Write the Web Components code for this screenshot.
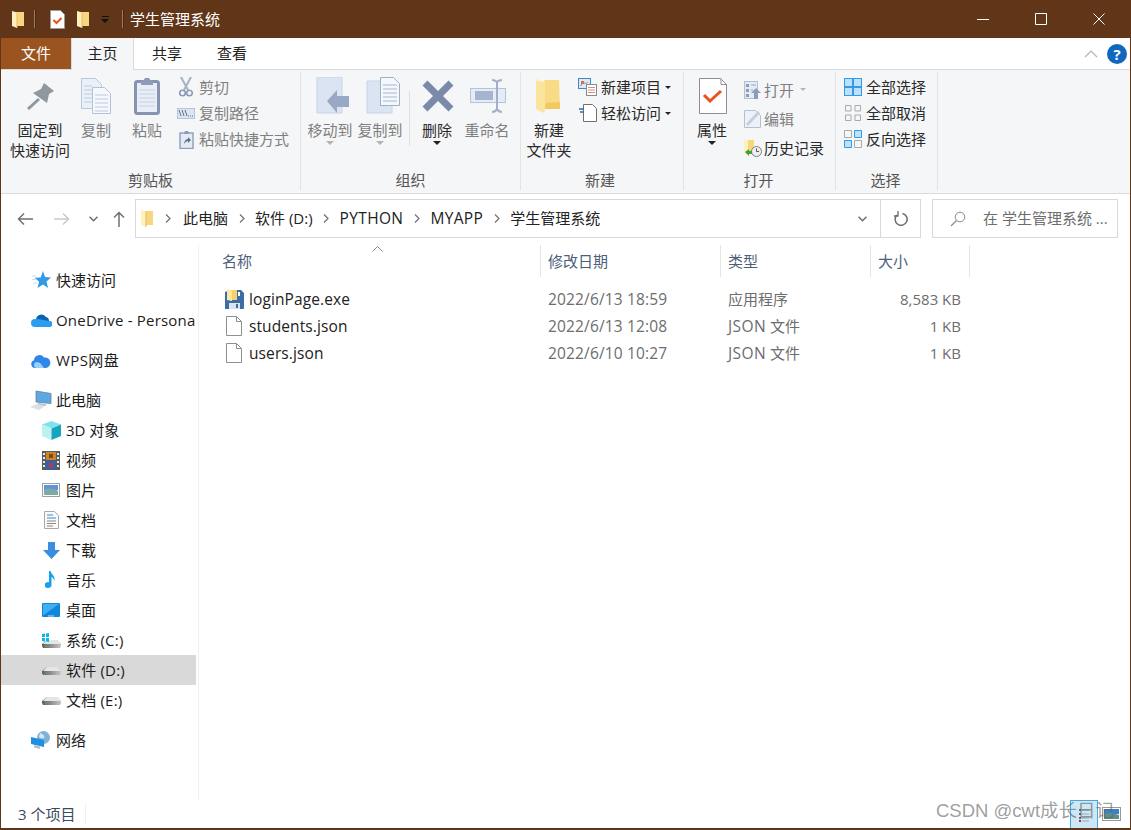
<!DOCTYPE html>
<html lang="zh">
<head>
<meta charset="utf-8">
<title>学生管理系统</title>
<style>
  html, body { margin: 0; padding: 0; background: #fff; }
  body { font: 15px/20px "Open Sans", "Noto Sans CJK SC", sans-serif; color: #222; }
</style>
</head>
<body>
<explorer-window>
  <title-bar slot="title">学生管理系统</title-bar>
  <ribbon-tabs slot="tabs"></ribbon-tabs>
  <file-ribbon slot="ribbon">
    <ribbon-group label="剪贴板" style="width:300px;padding-left:8px">
      <big-button icon="pin" w="62">固定到<br>快速访问</big-button>
      <big-button icon="copy" w="50" muted>复制</big-button>
      <big-button icon="paste" w="52" muted>粘贴</big-button>
      <small-stack style="--row:26px;--ic:18px;--gap:4px;margin-left:4px;margin-top:1px">
        <small-button icon="scissors" muted>剪切</small-button>
        <small-button icon="copypath" muted>复制路径</small-button>
        <small-button icon="shortcut" muted>粘贴快捷方式</small-button>
      </small-stack>
    </ribbon-group>
    <ribbon-group label="组织" style="width:220px;padding-left:4px">
      <big-button icon="moveto" w="50" muted caret="gray" style="--ioff:3px">移动到</big-button>
      <big-button icon="copyto" w="50" muted caret="gray" style="--ioff:3px">复制到</big-button>
      <ribbon-sep></ribbon-sep>
      <big-button icon="del" w="50" caret="dark" style="--ioff:1px">删除</big-button>
      <big-button icon="rename" w="50" muted style="--ioff:1px">重命名</big-button>
    </ribbon-group>
    <ribbon-group label="新建" style="width:163px;padding-left:3px;--shift:-4px">
      <big-button icon="bigfolder" w="50" style="--ioff:-1px">新建<br>文件夹</big-button>
      <small-stack style="--row:26px;--ic:19px;--gap:4px;margin-left:4px;margin-top:1px">
        <small-button icon="newitem" caret="dark">新建项目</small-button>
        <small-button icon="easy" caret="dark">轻松访问</small-button>
      </small-stack>
    </ribbon-group>
    <ribbon-group label="打开" style="width:152px;padding-left:3px;--shift:-2px">
      <big-button icon="props" w="50" caret="dark" style="--ioff:1px">属性</big-button>
      <small-stack style="--row:29px;--ic:17px;--gap:3px;margin-left:7px;margin-top:2px">
        <small-button icon="open" muted caret="gray">打开</small-button>
        <small-button icon="edit" muted>编辑</small-button>
        <small-button icon="history">历史记录</small-button>
      </small-stack>
    </ribbon-group>
    <ribbon-group label="选择" style="width:102px;padding-left:8px;--shift:-2px">
      <small-stack style="--row:26px;--ic:18px;--gap:4px;margin-top:1px">
        <small-button icon="selall">全部选择</small-button>
        <small-button icon="selnone">全部取消</small-button>
        <small-button icon="selinv">反向选择</small-button>
      </small-stack>
    </ribbon-group>
  </file-ribbon>
  <address-row slot="address"></address-row>
  <nav-pane slot="nav">
    <nav-item icon="star" style="margin-bottom:10px">快速访问</nav-item>
    <nav-item icon="onedrive" style="margin-bottom:10px;letter-spacing:.2px">OneDrive - Persona</nav-item>
    <nav-item icon="wps" style="margin-bottom:10px;letter-spacing:.4px">WPS网盘</nav-item>
    <nav-item icon="pc">此电脑</nav-item>
    <nav-item icon="cube" sub>3D 对象</nav-item>
    <nav-item icon="film" sub>视频</nav-item>
    <nav-item icon="pic" sub>图片</nav-item>
    <nav-item icon="docs" sub>文档</nav-item>
    <nav-item icon="down" sub>下载</nav-item>
    <nav-item icon="music" sub>音乐</nav-item>
    <nav-item icon="desktop" sub>桌面</nav-item>
    <nav-item icon="drivec" sub style="letter-spacing:.2px">系统 (C:)</nav-item>
    <nav-item icon="drive" sub selected style="letter-spacing:.2px">软件 (D:)</nav-item>
    <nav-item icon="drive" sub style="margin-bottom:10px;letter-spacing:.2px">文档 (E:)</nav-item>
    <nav-item icon="network">网络</nav-item>
  </nav-pane>
  <file-list slot="list">
    <file-row icon="exe" name="loginPage.exe" date="2022/6/13 18:59" type="应用程序" size="8,583 KB"></file-row>
    <file-row icon="file" name="students.json" date="2022/6/13 12:08" type="JSON 文件" size="1 KB"></file-row>
    <file-row icon="file" name="users.json" date="2022/6/10 10:27" type="JSON 文件" size="1 KB"></file-row>
  </file-list>
  <status-bar slot="status">3 个项目</status-bar>
</explorer-window>

<script>
const svg = (w, h, body) => `<svg xmlns="http://www.w3.org/2000/svg" width="${w}" height="${h}" viewBox="0 0 ${w} ${h}" fill="none">${body}</svg>`;

const driveBody = (y) => `<defs><linearGradient id="dg${y}"><stop offset="0" stop-color="#5f5f5f"/><stop offset="1" stop-color="#c6c6c6"/></linearGradient></defs>
  <path d="M0 ${y + 4}l5-4h10l4 4v2l-1 2H1l-1-2z" fill="url(#dg${y})"/><path d="M5 ${y}h10l4 4H1z" fill="#e6e6e6"/><path d="M3 ${y + 6}h2" stroke="#47c14a"/>`;

const ICONS = {
  sidefolder: svg(12, 17, '<path d="M4 1h8v14H4z" fill="#f6d77f"/><path d="M0 0l5 1.500V17L0 15z" fill="#fff0bd"/><path d="M5 1.500V17" stroke="#e3bd5e"/>'),
  checkdoc: svg(15, 19, '<path d="M.5.5h10l4 4v14H.5z" fill="#fff" stroke="#9b9b9b"/><path d="M3.500 10l3 3 5-5" stroke="#e8521f" stroke-width="2"/>'),
  pin: svg(27, 27, '<path d="M1 26l11-10" stroke="#8f979f" stroke-width="3"/><path d="M17 0l10 8-5 3-2 9L6 10l8-4z" fill="#8f979f"/>'),
  copy: svg(30, 36, '<path d="M.5.5h14l6 6v24H.5z" fill="#eaf0f8" stroke="#bac8db"/><path d="M11.500 9.500h12l6 6v20h-18z" fill="#f4f7fb" stroke="#b3c2d8"/><path d="M3 8h8M3 12h8M3 16h8M3 20h8M3 24h8M14 17h13M14 21h13M14 25h13M14 29h13M14 33h13" stroke="#bccbdf"/>'),
  paste: svg(26, 38, '<rect x="1.500" y="4.500" width="23" height="32" rx="2" fill="#e9eef6" stroke="#8694b2" stroke-width="3"/><path d="M9 4l2-3h4l2 3h2v4H7V4z" fill="#8e9cb9"/><path d="M5 13h16M5 17h16M5 21h16M5 25h16M5 29h16" stroke="#c6d1e3"/>'),
  scissors: svg(14, 20, '<path d="M2 0l7 13M12 0L5 13" stroke="#a6b1c4" stroke-width="2"/><circle cx="3.500" cy="16" r="2.800" stroke="#8c9ab6" stroke-width="1.600"/><circle cx="10.500" cy="16" r="2.800" stroke="#8c9ab6" stroke-width="1.600"/>'),
  copypath: svg(18, 11, '<rect x=".5" y=".5" width="17" height="10" fill="#dde5f1" stroke="#b6c3d8"/><path d="M2 2l2 6M5 2l2 6M8 2l2 6" stroke="#5f708e"/><path d="M11 8h1M13 8h1M15 8h1" stroke="#5f708e"/>'),
  shortcut: svg(15, 19, '<rect x="1" y="3" width="13" height="15.500" fill="#e5ebf4" stroke="#8f9dba" stroke-width="1.400"/><path d="M5 3l1-2h3l1 2v1H5z" fill="#8f9dba"/><path d="M5 14c0-3 2-5 4-5V7l3 3-3 3v-2c-1 0-3 1-4 3z" fill="#5d7095"/>'),
  moveto: svg(34, 38, '<path d="M1 0h25v36H1z" fill="#dbe4f2" stroke="#c8d4e6"/><path d="M12 28l10-11v6h12v11H22v6z" transform="translate(-1 -4)" fill="#98a8c5"/>'),
  copyto: svg(34, 38, '<path d="M1 4h25v32H1z" fill="#dbe4f2" stroke="#c8d4e6"/><path d="M14.500.5h13l6 6v22h-19z" fill="#f4f7fb" stroke="#9fafc8"/><path d="M17 8h14M17 12h14M17 16h14M17 20h14M17 24h14" stroke="#a9b8cf"/>'),
  del: svg(32, 32, '<path d="M3 3l26 26M29 3L3 29" stroke="#7a8aa8" stroke-width="7"/>'),
  rename: svg(36, 34, '<rect x=".5" y="9.500" width="35" height="14" fill="#e5ecf6" stroke="#b4c3d9"/><rect x="5" y="12" width="18" height="9" fill="#a6b5cf"/><path d="M22 1c3 0 4 1 5 2 1-1 2-2 5-2M27 3v27M22 33c3 0 4-1 5-3 1 2 2 3 5 3" stroke="#a2afc7" stroke-width="2"/>'),
  bigfolder: svg(24, 34, '<path d="M8 1h15l1 29H8z" fill="#f8db84"/><path d="M10 24l14-1v7H8z" fill="#f3c95f"/><path d="M0 0l9 3v27l-1 4-8-4z" fill="#fbe59d"/><path d="M0 1l9 2" stroke="#fff3c9"/>'),
  newitem: svg(19, 18, '<rect x=".5" y=".5" width="12" height="10" fill="#dbe9f7" stroke="#3f87c5"/><path d="M2.500 8l3-4 2 2 2-2" stroke="#7a9a55"/><rect x="3" y="3" width="3" height="3" fill="#d66"/><rect x="8.500" y="6.500" width="10" height="11" fill="#fff" stroke="#8a8a8a"/><path d="M10 9.500h7M10 12h7M10 14.500h7" stroke="#d98a8a"/>'),
  easy: svg(18, 18, '<path d="M4.500.5h9l4 4v13h-13z" fill="#fff" stroke="#707070"/><path d="M0 5h5M1 8h4" stroke="#2a6fb0" stroke-width="1.500"/>'),
  props: svg(28, 36, '<path d="M.5.5h21l6 6v29H.5z" fill="#fff" stroke="#8f8f8f"/><path d="M22 .5v6h5.500" stroke="#8f8f8f"/><path d="M5 17l6 6 11-10" stroke="#e9521e" stroke-width="3"/>'),
  open: svg(17, 18, '<rect x=".5" y=".5" width="13" height="17" fill="#e5ebf4" stroke="#b3bfd2"/><path d="M2 3h3v3H2zM2 8h3v3H2zM2 13h3v3H2z" fill="#8e9cb5"/><path d="M7 4h5M7 9h2" stroke="#9aa7bd"/><path d="M12 7l5 5h-3v6h-4v-6H7z" fill="#8c9dbb"/>'),
  edit: svg(17, 18, '<path d="M.5.5h11l5 5v12H.5z" fill="#eef2f8" stroke="#b3c0d4"/><path d="M3 15L15 2" stroke="#c3cfe0" stroke-width="3"/>'),
  history: svg(18, 18, '<path d="M3 1h7v14H3z" fill="#f6d77f"/><path d="M0 0l4 1v15l-4-2z" fill="#fff0bd"/><circle cx="12.500" cy="12.500" r="5" fill="#eee" stroke="#7f7f7f"/><path d="M12.500 9.500v3h2.500" stroke="#555"/><path d="M1 13l4-3v2h3v3H5v2z" fill="#3ba335"/>'),
  selall: svg(18, 18, '<rect x=".5" y=".5" width="17" height="17" fill="#bfe0fb" stroke="#2f9bea"/><path d="M9 0v18M0 9h18" stroke="#2f9bea" stroke-width="2"/>'),
  selnone: svg(18, 18, '<path d="M1.500 1.500h5.500v5.500H1.500zM11 1.500h5.500v5.500H11zM1.500 11h5.500v5.500H1.500zM11 11h5.500v5.500H11z" stroke="#a9a9a9"/>'),
  selinv: svg(18, 18, '<path d="M.5 .5h7v7h-7zM10.500 10.500h7v7h-7z" stroke="#a9a9a9"/><path d="M10.500.5h7v7h-7zM.5 10.500h7v7h-7z" fill="#bfe0fb" stroke="#2f9bea"/>'),
  star: svg(19, 18, '<path d="M11 0l2 6 6 .500-4.500 4 1.500 6.500-5-3.500L5.500 17l1.600-6.300-4.500-4 6-.3z" fill="#2f9ae6"/><path d="M0 5h4M0 8.500h5M1 12h4" stroke="#bfe0f7"/>'),
  onedrive: svg(21, 14, '<path d="M5 6a5.500 5.500 0 0 1 10-2 4 4 0 0 1 3 4H6z" fill="#0c63b5"/><path d="M4 14a3.900 3.900 0 0 1 0-8h3l11 2a3 3 0 0 1 1 6z" fill="#2a9df0"/>'),
  wps: svg(20, 15, '<path d="M4 15a4 4 0 0 1-1-7.800A5.500 5.500 0 0 1 13 4.500 5.300 5.300 0 0 1 15 15z" fill="#2f86e8"/><path d="M6 15a3 3 0 0 1 0-6c2 0 3 1 4 2l3 4z" fill="#9ad0fb"/>'),
  pc: svg(22, 20, '<path d="M6 1l15 2.500v10L6 12z" fill="#5aa8e4" stroke="#6f7f90" stroke-width=".8"/><path d="M8 13l8 1v2l-8-1z" fill="#b8c0c8"/><path d="M0 17l7-3 8 2-6 4z" fill="#dcdfe3"/>'),
  cube: svg(19, 19, '<path d="M9.500 0L19 3.500 9.500 7.500 0 3.500z" fill="#7fe3ec"/><path d="M0 3.500l9.500 4V19L0 15z" fill="#bdf0f2"/><path d="M19 3.500l-9.500 4V19L19 15z" fill="#15a5bc"/>'),
  film: svg(18, 19, '<rect width="18" height="19" fill="#5b5b5b"/><path d="M1 2h2v2H1zM1 6h2v2H1zM1 10h2v2H1zM1 14h2v2H1zM15 2h2v2h-2zM15 6h2v2h-2zM15 10h2v2h-2zM15 14h2v2h-2z" fill="#e8e8e8"/><rect x="4" y="1" width="10" height="8" fill="#c9832c"/><rect x="4" y="10" width="10" height="8" fill="#2e61b8"/><path d="M7 3h4v4H7z" fill="#7b4a1e"/><path d="M7 12h4v4H7z" fill="#c33"/>'),
  pic: svg(18, 14, '<rect x=".5" y=".5" width="17" height="13" fill="#fff" stroke="#a0a0a0"/><rect x="2" y="2" width="14" height="5" fill="#5f95d8"/><path d="M2 7c4-2 9-2 14 1v4H2z" fill="#7fa9a4"/>'),
  docs: svg(15, 18, '<path d="M.5.5h10l4 4v13H.5z" fill="#fafafa" stroke="#a9a9a9"/><path d="M3 4h6M3 7h9" stroke="#2f8fd8"/><path d="M3 10h9M3 12.500h9M3 15h6" stroke="#888"/>'),
  down: svg(17, 17, '<path d="M5 0h7v8h5l-8.500 9L0 8h5z" fill="#3b8de0"/>'),
  music: svg(12, 18, '<path d="M4 0h1.500c.5 3 5 5 4 10-.5-2-2-3.500-3-4v8a3.500 3 0 1 1-2.500-2.800z" fill="#14a1ee"/>'),
  desktop: svg(18, 14, '<rect width="18" height="14" rx="1" fill="#0f86d8"/><path d="M1 12.500V1h16z" fill="#3cb0f2"/><path d="M6 13h6" stroke="#bfe3f8"/>'),
  drive: svg(19, 9, driveBody(1)),
  drivec: svg(19, 15, driveBody(7) + '<path d="M0 1l3-.500v3.500H0zM4 .400L7 0v4H4zM0 5h3v3.500L0 8zM4 5h3v4l-3-.500z" fill="#10b3f0"/>'),
  network: svg(20, 19, '<circle cx="12.500" cy="6.500" r="6.500" fill="#7fb2d8"/><path d="M9 2c3 1 5 3 4 5-2 1-4 0-5-1z" fill="#d5e6f1"/><path d="M0 6l13 3v7L0 13z" fill="#1f8fe3"/><path d="M3 14l6 1.500V18l-6-1.500z" fill="#b6bec6"/>'),
  exe: svg(20, 20, '<path d="M1 3l5-2h11l3 3v15a1 1 0 0 1-1 1H1z" fill="#3a6ea5"/><path d="M3 1h10v10H3z" fill="#f6d16c"/><path d="M3 0l5 2v10l-5-1z" fill="#fde9a4"/><rect x="5" y="14" width="11" height="6" fill="#dbe5ef"/><rect x="12" y="15" width="2" height="4" fill="#3a6ea5"/><path d="M14 3h2v4h-2z" fill="#fff"/>'),
  file: svg(16, 20, '<path d="M.5.5h10l5 5v14H.5z" fill="#fff" stroke="#8f8f8f"/><path d="M10.500.5v5h5" stroke="#8f8f8f"/>'),
  back: svg(16, 14, '<path d="M16 7H1.500M7 1.500L1.500 7 7 12.500" stroke="#6f6f6f" stroke-width="1.500"/>'),
  fwd: svg(16, 14, '<path d="M0 7h14.500M9 1.500L14.500 7 9 12.500" stroke="#c9c9c9" stroke-width="1.500"/>'),
  chevdown: svg(9, 6, '<path d="M.5.800L4.500 4.800 8.500.800" stroke="#6f6f6f" stroke-width="1.500"/>'),
  up: svg(12, 16, '<path d="M6 16V1.500M1 6.500l5-5 5 5" stroke="#6f6f6f" stroke-width="1.500"/>'),
  crumb: svg(6, 9, '<path d="M1 .5l4 4-4 4" stroke="#6f6f6f" stroke-width="1.200"/>'),
  refresh: svg(14, 15, '<path d="M8.500 2.500a6 6 0 1 1-5.500 1.500" stroke="#6b6b6b" stroke-width="1.500"/><path d="M4 0v5H0" stroke="#6b6b6b" stroke-width="1.300"/>'),
  search: svg(16, 16, '<circle cx="10" cy="6" r="4.800" stroke="#8a8a8a"/><path d="M6.500 9.500L1 15" stroke="#8a8a8a" stroke-width="1.200"/>'),
  details: svg(12, 16, '<path d="M1 2h2v2H1zM1 6h2v2H1zM1 10h2v2H1z" fill="#6a6a6a"/><path d="M1 13h2v2H1z" fill="#c0272d"/><path d="M4 3h7M4 7h7M4 11h7M4 14h7" stroke="#9aa6b5"/>'),
  thumbs: svg(19, 14, '<rect x=".5" y=".5" width="18" height="13" fill="#fff" stroke="#999"/><rect x="2" y="2" width="15" height="5" fill="#3c7fc6"/><path d="M2 7c5-2 9-1 15 1v4H2z" fill="#5c8f88"/>')
};

class FileIcon extends HTMLElement {
  constructor() {
    super();
    this.attachShadow({mode: 'open'});
    this.shadowRoot.innerHTML = `
      <style>
        :host { display: inline-flex; flex: none; align-items: center; justify-content: center; }
        svg { display: block; }
      </style>
      ${ICONS[this.getAttribute('name')] || ''}
    `;
  }
}
customElements.define('file-icon', FileIcon);

class ExplorerWindow extends HTMLElement {
  constructor() {
    super();
    this.attachShadow({mode: 'open'});
    this.shadowRoot.innerHTML = `
      <style>
        :host {
          display: flex; flex-direction: column; position: relative; box-sizing: border-box;
          width: 1131px; height: 830px; overflow: hidden; background: #fff;
          border: 1px solid #603518; border-width: 0 1px 2px 1px;
        }
        .main { flex: 1; min-height: 0; display: flex; }
        .mark {
          position: absolute; left: 935px; top: 800px; font: 18.5px/22px "Liberation Sans", "Noto Sans CJK SC", sans-serif;
          color: rgba(95, 95, 95, .62); white-space: nowrap;
        }
      </style>
      <slot name="title"></slot>
      <slot name="tabs"></slot>
      <slot name="ribbon"></slot>
      <slot name="address"></slot>
      <div class="main"><slot name="nav"></slot><slot name="list"></slot></div>
      <slot name="status"></slot>
      <div class="mark">CSDN @cwt成长日记</div>
    `;
  }
}
customElements.define('explorer-window', ExplorerWindow);

class TitleBar extends HTMLElement {
  constructor() {
    super();
    this.attachShadow({mode: 'open'});
    this.shadowRoot.innerHTML = `
      <style>
        :host {
          display: flex; align-items: center; height: 38px; margin: 0 -1px; padding-left: 12px; box-sizing: border-box;
          background: #603518; color: #fff; flex: none;
        }
        .bar { width: 1px; height: 18px; background: #9a7c66; border-right: 1px solid #4a2810; }
        .drop { width: 8px; height: 7px; display: flex; flex-direction: column; gap: 2px; align-items: center; }
        .drop i { display: block; width: 7px; height: 1px; background: #111; }
        .drop b { display: block; border: 4px solid transparent; border-top-color: #111; border-bottom: 0; }
        .text { margin-left: 6px; flex: 1; }
        .ctl { width: 58px; height: 38px; display: flex; align-items: center; justify-content: center; }
        .ctls { display: flex; margin-right: 3px; }
      </style>
      <file-icon name="sidefolder"></file-icon>
      <span class="bar" style="margin-left:10px"></span>
      <file-icon name="checkdoc" style="margin-left:14px"></file-icon>
      <file-icon name="sidefolder" style="margin-left:12px"></file-icon>
      <span class="drop" style="margin-left:12px"><i></i><b></b></span>
      <span class="bar" style="margin-left:13px"></span>
      <span class="text"><slot></slot></span>
      <div class="ctls">
        <div class="ctl"><svg width="12" height="12" viewBox="0 0 12 12"><path d="M0 6.500h12" stroke="#fff"/></svg></div>
        <div class="ctl"><svg width="12" height="12" viewBox="0 0 12 12" fill="none"><path d="M.5.5h11v11H.5z" stroke="#fff"/></svg></div>
        <div class="ctl"><svg width="12" height="12" viewBox="0 0 12 12"><path d="M.5.5l11 11M11.500.5l-11 11" stroke="#fff"/></svg></div>
      </div>
    `;
  }
}
customElements.define('title-bar', TitleBar);

class RibbonTabs extends HTMLElement {
  constructor() {
    super();
    this.attachShadow({mode: 'open'});
    this.shadowRoot.innerHTML = `
      <style>
        :host {
          display: flex; height: 32px; flex: none; box-sizing: border-box; position: relative;
          background: #fff; border-bottom: 1px solid #dadbdc;
        }
        .tab { display: flex; align-items: center; justify-content: center; height: 31px; padding-bottom: 2px; box-sizing: border-box; color: #222; }
        .file { width: 70px; background: #9b5420; color: #fff; }
        .on {
          width: 63px; height: 32px; background: #f5f6f7; padding-bottom: 3px;
          border: 1px solid #dadbdc; border-width: 0 1px; margin-bottom: -1px;
        }
        .end { margin-left: auto; display: flex; align-items: center; gap: 9px; padding-right: 3px; }
        .help {
          width: 20px; height: 20px; border-radius: 50%; background: #0f68bd; color: #fff;
          font: bold 15px/20px "Open Sans", sans-serif; text-align: center;
        }
      </style>
      <div class="tab file">文件</div>
      <div class="tab on">主页</div>
      <div class="tab" style="width:66px">共享</div>
      <div class="tab" style="width:64px">查看</div>
      <div class="end">
        <svg width="14" height="8" viewBox="0 0 14 8" fill="none"><path d="M1 7l6-6 6 6" stroke="#b4b4b4" stroke-width="1.200"/></svg>
        <div class="help">?</div>
      </div>
    `;
  }
}
customElements.define('ribbon-tabs', RibbonTabs);

class FileRibbon extends HTMLElement {
  constructor() {
    super();
    this.attachShadow({mode: 'open'});
    this.shadowRoot.innerHTML = `
      <style>
        :host {
          display: flex; height: 124px; flex: none; box-sizing: border-box; padding: 2px 0 3px;
          background: #f5f6f7; border-bottom: 1px solid #dadbdc;
        }
      </style>
      <slot></slot>
    `;
  }
}
customElements.define('file-ribbon', FileRibbon);

class RibbonGroup extends HTMLElement {
  constructor() {
    super();
    this.attachShadow({mode: 'open'});
    this.shadowRoot.innerHTML = `
      <style>
        :host {
          display: grid; grid-template-rows: 1fr 22px; box-sizing: border-box; height: 118px; flex: none;
          border-right: 1px solid #e2e3e4;
        }
        .body { display: flex; align-items: flex-start; min-height: 0; }
        .label { margin: 2px 0 0 calc(var(--shift, 0px) - var(--pad, 0px)); text-align: center; color: #555; line-height: 20px; }
      </style>
      <div class="body"><slot></slot></div>
      <div class="label"></div>
    `;
    this.shadowRoot.querySelector('.label').textContent = this.getAttribute('label');
    this.style.setProperty('--pad', this.style.paddingLeft);
  }
}
customElements.define('ribbon-group', RibbonGroup);

class BigButton extends HTMLElement {
  constructor() {
    super();
    this.attachShadow({mode: 'open'});
    const caret = this.getAttribute('caret');
    this.shadowRoot.innerHTML = `
      <style>
        :host {
          display: flex; flex-direction: column; align-items: center; flex: none; white-space: nowrap;
          text-align: center; line-height: 20px; color: #2a2a2a;
          width: ${this.getAttribute('w')}px;
        }
        :host([muted]) { color: #7f7f7f; }
        .ic { height: 48px; display: flex; align-items: center; justify-content: center; margin-left: calc(var(--ioff, 0px) * 2); }
        .caret { width: 0; height: 0; border: 4px solid transparent; border-bottom: 0; border-top-color: #222; margin-top: 1px; }
        .caret.gray { border-top-color: #b4b4b4; }
      </style>
      <div class="ic"><file-icon name="${this.getAttribute('icon')}"></file-icon></div>
      <div><slot></slot></div>
      ${caret ? `<div class="caret ${caret}"></div>` : ''}
    `;
  }
}
customElements.define('big-button', BigButton);

class RibbonSep extends HTMLElement {
  constructor() {
    super();
    this.attachShadow({mode: 'open'});
    this.shadowRoot.innerHTML = `
      <style>
        :host { display: block; flex: none; width: 1px; height: 55px; margin: 19px 2px 0 4px; background: #dfe0e1; }
      </style>
    `;
  }
}
customElements.define('ribbon-sep', RibbonSep);

class SmallStack extends HTMLElement {
  constructor() {
    super();
    this.attachShadow({mode: 'open'});
    this.shadowRoot.innerHTML = `
      <style>
        :host { display: flex; flex-direction: column; flex: none; padding-top: 1px; }
      </style>
      <slot></slot>
    `;
  }
}
customElements.define('small-stack', SmallStack);

class SmallButton extends HTMLElement {
  constructor() {
    super();
    this.attachShadow({mode: 'open'});
    const caret = this.getAttribute('caret');
    this.shadowRoot.innerHTML = `
      <style>
        :host { display: flex; align-items: center; height: var(--row); white-space: nowrap; color: #2a2a2a; }
        :host([muted]) { color: #7f7f7f; }
        .ic { width: var(--ic); margin-right: var(--gap); display: flex; justify-content: center; }
        .caret { width: 0; height: 0; border: 3.500px solid transparent; border-bottom: 0; border-top-color: #222; margin-left: 4px; }
        .caret.gray { border-top-color: #b4b4b4; margin-left: 6px; }
      </style>
      <div class="ic"><file-icon name="${this.getAttribute('icon')}"></file-icon></div>
      <slot></slot>
      ${caret ? `<div class="caret ${caret}"></div>` : ''}
    `;
  }
}
customElements.define('small-button', SmallButton);

class AddressRow extends HTMLElement {
  constructor() {
    super();
    this.attachShadow({mode: 'open'});
    const crumbs = ['此电脑', '软件 (D:)', 'PYTHON', 'MYAPP', '学生管理系统'];
    const crumbHtml = c => `<span class="${/^[A-Z]+$/.test(c) ? 'txt latin' : 'txt'}">${c}</span>`;
    this.shadowRoot.innerHTML = `
      <style>
        :host {
          display: flex; align-items: center; height: 51px; flex: none; box-sizing: border-box;
          padding: 5px 12px 7px 16px; background: #fff;
        }
        .box { height: 39px; box-sizing: border-box; border: 1px solid #d9d9d9; display: flex; align-items: center; }
        .addr { flex: none; width: 786px; margin-left: 10px; padding-left: 5px; }
        .txt { margin-bottom: 2px; }
        .latin { font-size: 15.5px; letter-spacing: .35px; }
        .chev { flex: none; width: 27px; display: flex; justify-content: center; }
        .end { margin-left: auto; display: flex; align-items: center; height: 100%; }
        .drop { width: 35px; display: flex; justify-content: center; }
        .re { width: 39px; height: 100%; border-left: 1px solid #d9d9d9; display: flex; align-items: center; justify-content: center; }
        .search { flex: 1; margin-left: 11px; padding-left: 17px; color: #6d6d6d; white-space: nowrap; }
      </style>
      <file-icon name="back"></file-icon>
      <file-icon name="fwd" style="margin-left:21px"></file-icon>
      <file-icon name="chevdown" style="margin-left:19px"></file-icon>
      <file-icon name="up" style="margin-left:15px"></file-icon>
      <div class="box addr">
        <file-icon name="sidefolder"></file-icon>
        <span class="chev" style="width:30px"><file-icon name="crumb"></file-icon></span>
        ${crumbs.map((c, i) => crumbHtml(c) + (i < crumbs.length - 1 ? '<span class="chev"><file-icon name="crumb"></file-icon></span>' : '')).join('')}
        <div class="end">
          <div class="drop"><file-icon name="chevdown"></file-icon></div>
          <div class="re"><file-icon name="refresh"></file-icon></div>
        </div>
      </div>
      <div class="box search">
        <file-icon name="search"></file-icon>
        <span class="txt" style="margin-left:17px">在 学生管理系统 ...</span>
      </div>
    `;
  }
}
customElements.define('address-row', AddressRow);

class NavPane extends HTMLElement {
  constructor() {
    super();
    this.attachShadow({mode: 'open'});
    this.shadowRoot.innerHTML = `
      <style>
        :host {
          display: flex; flex-direction: column; flex: none; box-sizing: border-box; width: 198px;
          padding: 20px 2px 0 0; border-right: 1px solid #f0f0f0; height: 100%; overflow: hidden;
        }
      </style>
      <slot></slot>
    `;
  }
}
customElements.define('nav-pane', NavPane);

class NavItem extends HTMLElement {
  constructor() {
    super();
    this.attachShadow({mode: 'open'});
    this.shadowRoot.innerHTML = `
      <style>
        :host {
          display: flex; align-items: center; flex: none; height: 30px; padding-left: 30px;
          overflow: hidden; white-space: nowrap; color: #1c1c1c;
        }
        :host([sub]) { padding-left: 40px; }
        :host([selected]) { background: #d9d9d9; }
        .ic { width: 20px; margin-right: 5px; display: flex; justify-content: center; flex: none; }
      </style>
      <div class="ic"><file-icon name="${this.getAttribute('icon')}"></file-icon></div>
      <slot></slot>
    `;
  }
}
customElements.define('nav-item', NavItem);

class FileList extends HTMLElement {
  constructor() {
    super();
    this.attachShadow({mode: 'open'});
    this.shadowRoot.innerHTML = `
      <style>
        :host { display: block; flex: 1; min-width: 0; position: relative; --cols: 341px 180px 150px 100px; }
        .head { display: grid; grid-template-columns: var(--cols); height: 32px; color: #4c607a; margin-bottom: 8px; }
        .head div { display: flex; align-items: center; padding-left: 7px; border-left: 1px solid #e5e5e5; }
        .head div:first-child { padding-left: 23px; border-left: 0; position: relative; }
        .head div:last-child { border-right: 1px solid #e5e5e5; }
        .sort { position: absolute; left: 173px; top: 1px; }
      </style>
      <div class="head">
        <div>名称<svg class="sort" width="11" height="6" viewBox="0 0 11 6" fill="none"><path d="M.5 5.500l5-5 5 5" stroke="#8a8a8a"/></svg></div>
        <div>修改日期</div><div>类型</div><div>大小</div>
      </div>
      <slot></slot>
    `;
  }
}
customElements.define('file-list', FileList);

class FileRow extends HTMLElement {
  constructor() {
    super();
    this.attachShadow({mode: 'open'});
    const a = n => this.getAttribute(n);
    this.shadowRoot.innerHTML = `
      <style>
        :host { display: grid; grid-template-columns: var(--cols); height: 27px; align-items: center; color: #6d6d6d; white-space: nowrap; }
        .name { display: flex; align-items: center; padding-left: 25px; color: #222; font-size: 15.5px; letter-spacing: .1px; }
        .ic { width: 20px; margin-right: 5px; display: flex; justify-content: center; }
        .pad { padding-left: 8px; }
        .date { font-size: 15.5px; letter-spacing: .15px; }
        .latin { font-size: 15.5px; letter-spacing: .4px; }
        .size { text-align: right; padding-right: 9px; }
      </style>
      <div class="name"><div class="ic"><file-icon name="${a('icon')}"></file-icon></div>${a('name')}</div>
      <div class="pad date">${a('date')}</div>
      <div class="pad">${a('type').replace(/[A-Z]+/, m => `<span class="latin">${m}</span>`)}</div>
      <div class="size">${a('size')}</div>
    `;
  }
}
customElements.define('file-row', FileRow);

class StatusBar extends HTMLElement {
  constructor() {
    super();
    this.attachShadow({mode: 'open'});
    this.shadowRoot.innerHTML = `
      <style>
        :host {
          display: flex; align-items: center; height: 28px; flex: none; padding-left: 17px;
          color: #3c4a5e; background: #fff;
        }
        .bar { width: 1px; height: 20px; background: #f0f0f0; margin-left: 10px; }
        .views { margin-left: auto; display: flex; align-items: center; height: 100%; margin-right: 9px; }
        .on {
          width: 28px; height: 100%; box-sizing: border-box; background: #cce8f7; border: 1px solid #3fa9e0; border-bottom: 0;
          display: flex; align-items: center; justify-content: center; margin-right: 4px;
        }
      </style>
      <slot></slot>
      <span class="bar"></span>
      <div class="views">
        <div class="on"><file-icon name="details"></file-icon></div>
        <file-icon name="thumbs"></file-icon>
      </div>
    `;
  }
}
customElements.define('status-bar', StatusBar);
</script>
</body>
</html>
